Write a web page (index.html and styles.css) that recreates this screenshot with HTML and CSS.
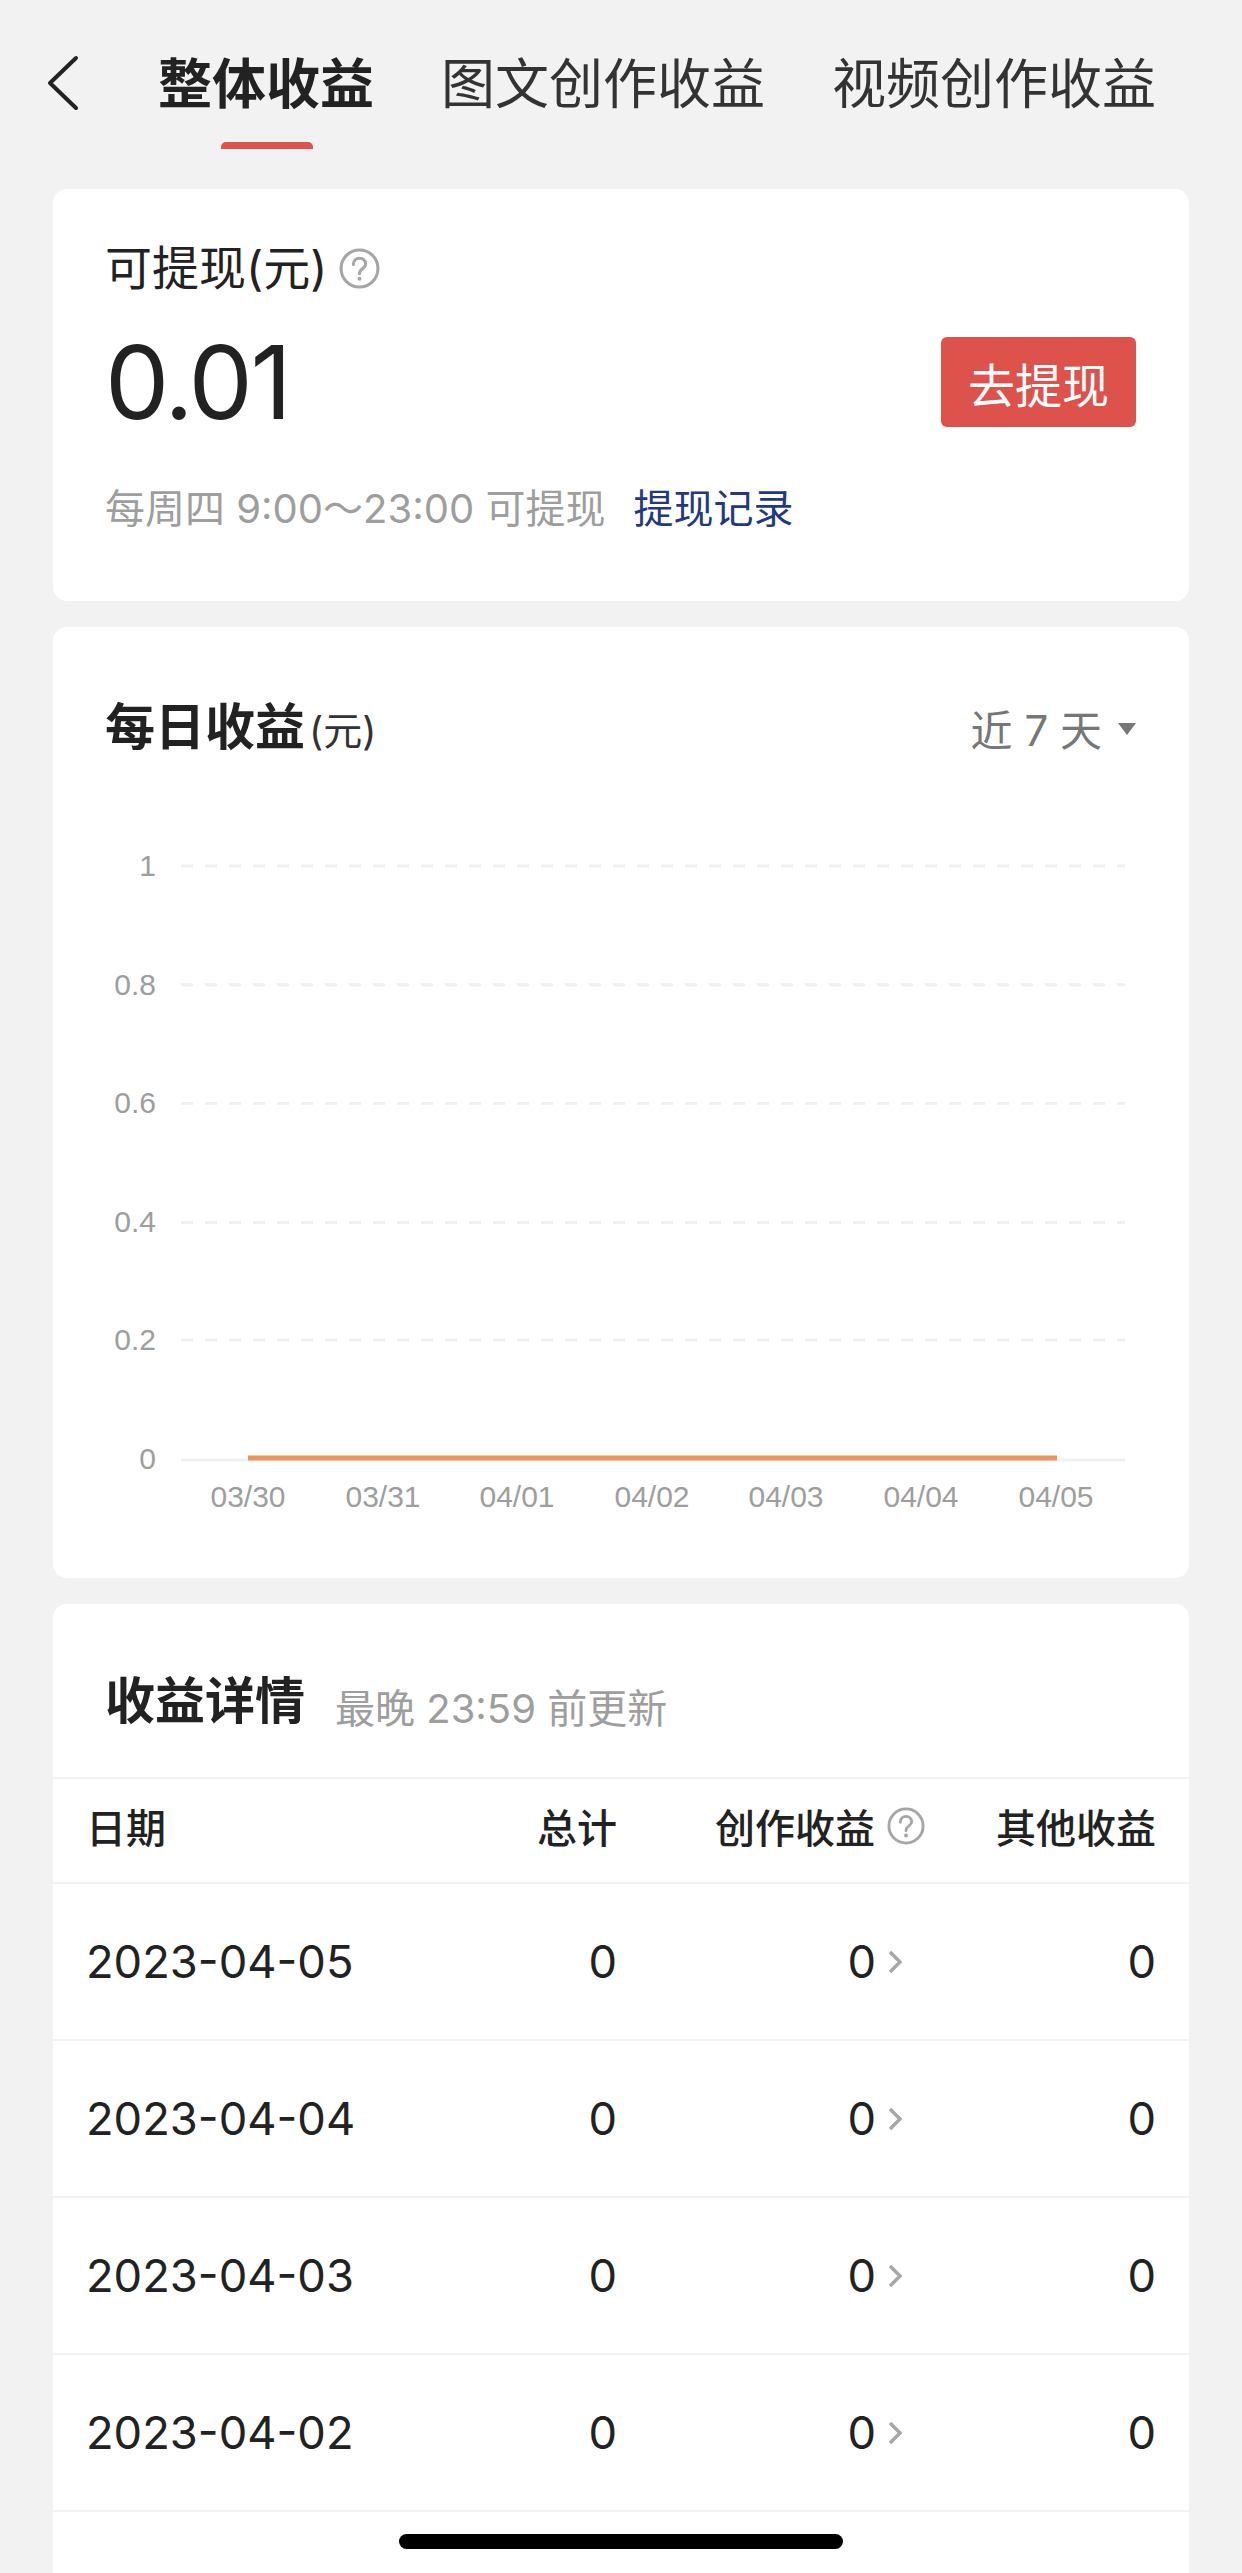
FILE: index.html
```html
<!DOCTYPE html>
<html lang="zh-CN">
<head>
    <meta charset="UTF-8">
    <meta name="viewport" content="width=device-width, initial-scale=1.0">
    <title>收益</title>
    <link rel="stylesheet" href="styles.css">
</head>
<body>
    <nav class="tabs">
        <svg class="back" width="32" height="56" viewBox="0 0 32 56">
            <path d="M29 3 L3 28 L29 53"/>
        </svg>
        <a class="tab tab-active">整体收益</a>
        <a class="tab">图文创作收益</a>
        <a class="tab">视频创作收益</a>
    </nav>

    <main class="cards">
        <section class="card withdraw">
            <div class="withdraw-label">
                <span>可提现(元)</span>
                <svg class="help" width="41" height="41" viewBox="0 0 40 40">
                    <circle cx="20" cy="20" r="18"/>
                    <path d="M14 16 C14 8 26 8 26 15.5 C26 20 20 20 20 25"/>
                    <circle class="help-dot" cx="20" cy="30" r="2"/>
                </svg>
            </div>
            <div class="withdraw-row">
                <span class="amount">0.01</span>
                <button type="button" class="withdraw-btn">去提现</button>
            </div>
            <p class="withdraw-note">每周四 9:00～23:00 可提现<a class="record-link">提现记录</a></p>
        </section>

        <section class="card daily">
            <div class="daily-head">
                <h2 class="card-title">每日收益<small>(元)</small></h2>
                <div class="range">近 7 天<i class="range-arrow"></i></div>
            </div>
            <svg class="chart" width="1136" height="816" viewBox="0 0 1136 816">
                <g class="grid">
                    <line x1="128" x2="1072" y1="104" y2="104"/>
                    <line x1="128" x2="1072" y1="222.8" y2="222.8"/>
                    <line x1="128" x2="1072" y1="341.6" y2="341.6"/>
                    <line x1="128" x2="1072" y1="460.4" y2="460.4"/>
                    <line x1="128" x2="1072" y1="578" y2="578"/>
                </g>
                <line class="axis" x1="128" x2="1072" y1="698" y2="698"/>
                <line class="series" x1="195" x2="1004" y1="696" y2="696"/>
                <g class="y-labels">
                    <text x="103" y="114">1</text>
                    <text x="103" y="233">0.8</text>
                    <text x="103" y="351">0.6</text>
                    <text x="103" y="470">0.4</text>
                    <text x="103" y="588">0.2</text>
                    <text x="103" y="707">0</text>
                </g>
                <g class="x-labels">
                    <text x="195" y="745">03/30</text>
                    <text x="330" y="745">03/31</text>
                    <text x="464" y="745">04/01</text>
                    <text x="599" y="745">04/02</text>
                    <text x="733" y="745">04/03</text>
                    <text x="868" y="745">04/04</text>
                    <text x="1003" y="745">04/05</text>
                </g>
            </svg>
        </section>

        <section class="card details">
            <div class="details-head">
                <h2 class="card-title">收益详情</h2>
                <span class="details-note">最晚 23:59 前更新</span>
            </div>
            <div class="row row-head">
                <span class="col-date">日期</span>
                <span>总计</span>
                <span class="col-create">创作收益
                    <svg class="help" width="38" height="38" viewBox="0 0 40 40">
                        <circle cx="20" cy="20" r="18"/>
                        <path d="M14 16 C14 8 26 8 26 15.5 C26 20 20 20 20 25"/>
                        <circle class="help-dot" cx="20" cy="30" r="2"/>
                    </svg>
                </span>
                <span>其他收益</span>
            </div>
            <div class="row">
                <span class="col-date">2023-04-05</span>
                <span>0</span>
                <span class="col-create">0<svg class="chevron" width="14" height="24" viewBox="0 0 14 24"><path d="M2 2 L12 12 L2 22"/></svg></span>
                <span>0</span>
            </div>
            <div class="row">
                <span class="col-date">2023-04-04</span>
                <span>0</span>
                <span class="col-create">0<svg class="chevron" width="14" height="24" viewBox="0 0 14 24"><path d="M2 2 L12 12 L2 22"/></svg></span>
                <span>0</span>
            </div>
            <div class="row">
                <span class="col-date">2023-04-03</span>
                <span>0</span>
                <span class="col-create">0<svg class="chevron" width="14" height="24" viewBox="0 0 14 24"><path d="M2 2 L12 12 L2 22"/></svg></span>
                <span>0</span>
            </div>
            <div class="row">
                <span class="col-date">2023-04-02</span>
                <span>0</span>
                <span class="col-create">0<svg class="chevron" width="14" height="24" viewBox="0 0 14 24"><path d="M2 2 L12 12 L2 22"/></svg></span>
                <span>0</span>
            </div>
            <div class="row">
                <span class="col-date">2023-04-01</span>
                <span>0</span>
                <span class="col-create">0<svg class="chevron" width="14" height="24" viewBox="0 0 14 24"><path d="M2 2 L12 12 L2 22"/></svg></span>
                <span>0</span>
            </div>
        </section>
    </main>

    <div class="home-bar"></div>
</body>
</html>
```

FILE: styles.css
```css
body {
    font-family: Inter, "Noto Sans CJK SC", sans-serif;
    background-color: #f2f2f2;
    color: #222222;
    margin: 0;
    padding: 0;
    height: 2573px;
    overflow: hidden;
}

.tabs {
    display: flex;
    align-items: flex-start;
    height: 189px;
    padding: 50px 0 0 48px;
    box-sizing: border-box;
}

.back {
    margin: 5px 0 0 -1px;
    fill: none;
    stroke: #222222;
    stroke-width: 4;
    stroke-linecap: round;
    stroke-linejoin: round;
}

.tab {
    position: relative;
    font-size: 54px;
    line-height: 70px;
    margin-left: 67px;
    color: #333333;
}

.back + .tab {
    margin-left: 79px;
}

.tab-active {
    font-weight: 700;
    color: #222222;
}

.tab-active::after {
    content: "";
    position: absolute;
    left: 63px;
    top: 92px;
    width: 92px;
    height: 7px;
    background-color: #dd524b;
    border-radius: 5px 5px 0 0;
}

.cards {
    display: flex;
    flex-direction: column;
    gap: 26px;
    margin: 0 53px;
}

.card {
    background-color: #ffffff;
    border-radius: 14px;
}

.withdraw {
    padding: 49px 53px 62px 52px;
}

.withdraw-label {
    display: flex;
    align-items: center;
    gap: 12px;
    font-size: 47px;
    line-height: 60px;
}

.help {
    fill: none;
    stroke: #a6a6a6;
    stroke-width: 3;
    stroke-linecap: round;
}

.help-dot {
    fill: #a6a6a6;
    stroke: none;
}

.withdraw-row {
    display: flex;
    align-items: center;
    justify-content: space-between;
    margin-top: 39px;
}

.amount {
    font-size: 102px;
    line-height: 90px;
    letter-spacing: -2.5px;
}

.withdraw-btn {
    width: 195px;
    height: 90px;
    padding: 0;
    border: none;
    border-radius: 6px;
    background-color: #dd524b;
    color: #ffffff;
    font-family: inherit;
    font-size: 47px;
}

.withdraw-note {
    margin: 52px 0 0;
    font-size: 40px;
    line-height: 60px;
    color: #9e9e9e;
}

.record-link {
    margin-left: 28px;
    color: #1f3a83;
}

.daily-head {
    display: flex;
    align-items: center;
    justify-content: space-between;
    padding: 65px 53px 0 52px;
    height: 70px;
}

.card-title {
    margin: 0;
    font-size: 50px;
    line-height: 70px;
    font-weight: 700;
}

.daily-head .card-title {
    padding-top: 3px;
}

.card-title small {
    margin-left: 4px;
    font-size: 39px;
    font-weight: 400;
    color: #333333;
}

.range {
    display: flex;
    align-items: center;
    font-size: 42px;
    color: #777777;
}

.range-arrow {
    width: 0;
    height: 0;
    margin: 3px 0 0 16px;
    border-left: 9px solid transparent;
    border-right: 9px solid transparent;
    border-top: 12px solid #777777;
}

.chart {
    display: block;
}

.grid line {
    stroke: #f0f0f0;
    stroke-width: 3;
    stroke-dasharray: 12 12;
}

.axis {
    stroke: #f0f0f0;
    stroke-width: 3;
}

.series {
    stroke: #e8965f;
    stroke-width: 5;
}

.y-labels text,
.x-labels text {
    font-family: "Liberation Sans", sans-serif;
    font-size: 30px;
    fill: #9e9e9e;
}

.y-labels text {
    text-anchor: end;
}

.x-labels text {
    text-anchor: middle;
}

.details-head {
    display: flex;
    align-items: center;
    gap: 30px;
    height: 173px;
    padding: 20px 52px 0;
    box-sizing: border-box;
}

.details-note {
    margin-top: 10px;
    font-size: 40px;
    color: #9e9e9e;
}

.row {
    display: grid;
    grid-template-columns: 1fr 214px 310px 229px;
    align-items: center;
    height: 157px;
    padding: 0 33px 0 33px;
    box-sizing: border-box;
    border-top: 2px solid #f2f2f2;
    font-size: 45.3px;
    text-align: right;
}

.row-head {
    height: 105px;
    padding-bottom: 10px;
    font-size: 40px;
    font-weight: 500;
}

.col-date {
    text-align: left;
}

.col-create {
    display: flex;
    align-items: center;
    justify-content: flex-end;
    gap: 12px;
}

.row-head .help {
    margin-right: 2px;
}

.chevron {
    margin-right: 25px;
    fill: none;
    stroke: #a8a8a8;
    stroke-width: 3.5;
}

.home-bar {
    position: fixed;
    left: 399px;
    top: 2534px;
    width: 444px;
    height: 15px;
    background-color: #000000;
    border-radius: 8px;
}
```
